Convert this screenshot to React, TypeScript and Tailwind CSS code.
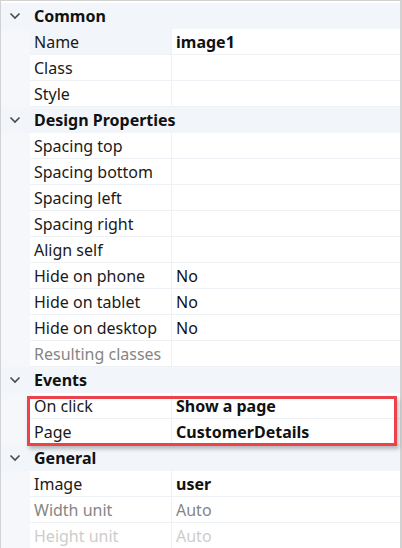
import React from 'react'

type Row = {
  label: string
  value?: string
  bold?: boolean
  muted?: boolean
  faded?: boolean
  selected?: boolean
}

type Group = { title: string; rows: Row[] }

const groups: Group[] = [
  {
    title: 'Common',
    rows: [
      { label: 'Name', value: 'image1', bold: true, selected: true },
      { label: 'Class' },
      { label: 'Style' },
    ],
  },
  {
    title: 'Design Properties',
    rows: [
      { label: 'Spacing top' },
      { label: 'Spacing bottom' },
      { label: 'Spacing left' },
      { label: 'Spacing right' },
      { label: 'Align self' },
      { label: 'Hide on phone', value: 'No' },
      { label: 'Hide on tablet', value: 'No' },
      { label: 'Hide on desktop', value: 'No' },
      { label: 'Resulting classes', muted: true },
    ],
  },
  {
    title: 'Events',
    rows: [
      { label: 'On click', value: 'Show a page', bold: true },
      { label: 'Page', value: 'CustomerDetails', bold: true },
    ],
  },
  {
    title: 'General',
    rows: [
      { label: 'Image', value: 'user', bold: true },
      { label: 'Width unit', value: 'Auto', muted: true },
      { label: 'Height unit', value: 'Auto', faded: true },
    ],
  },
]

function Chevron() {
  return (
    <svg width="12" height="8" viewBox="0 0 12 8" className="text-[#4a4a4a]">
      <path d="M1.5 1.5 L6 6 L10.5 1.5" fill="none" stroke="currentColor" strokeWidth="1.6" />
    </svg>
  )
}

function GroupHeader({ title }: { title: string }) {
  return (
    <div className="flex h-[26px] items-center bg-[#f2f5f9]">
      <div className="flex w-[29px] shrink-0 justify-center pr-[1px]">
        <Chevron />
      </div>
      <span className="pl-[4px] font-bold text-[#111]">{title}</span>
    </div>
  )
}

function PropRow({ row }: { row: Row }) {
  const labelColor = row.faded ? 'text-[#cdcdcd]' : row.muted ? 'text-[#858585]' : 'text-[#1a1a1a]'
  const valueColor = row.faded
    ? 'text-[#cdcdcd]'
    : row.muted
      ? 'text-[#858585]'
      : 'text-[#111]'
  return (
    <div className="flex h-[26px]">
      <div className="w-[29px] shrink-0 bg-[#f5f7fa]" />
      <div
        className={`flex w-[142px] shrink-0 items-center border-b border-r border-[#eef1f5] pl-[4px] ${labelColor} ${
          row.selected ? 'bg-[#f2f5f9]' : 'bg-white'
        }`}
      >
        {row.label}
      </div>
      <div
        className={`flex flex-1 items-center border-b border-[#eef1f5] bg-white pl-[4px] ${valueColor} ${
          row.bold ? 'font-bold' : ''
        }`}
      >
        {row.value}
      </div>
    </div>
  )
}

export default function App() {
  return (
    <div className="h-[548px] w-[402px] overflow-hidden bg-white">
      <div
        className="relative h-[548px] w-[402px] border-l border-r-2 border-t border-[#d2d2d2] pt-[2px] text-[16px] leading-none"
        style={{ fontFamily: '"Noto Sans", "Open Sans", sans-serif' }}
      >
        {groups.map((g) => (
          <div key={g.title}>
            <GroupHeader title={g.title} />
            {g.rows.map((r) => (
              <PropRow key={r.label} row={r} />
            ))}
          </div>
        ))}
        <div className="absolute left-[26px] top-[395px] h-[50px] w-[370px] border-[3px] border-[#ec4249] shadow-[2px_3px_4px_rgba(0,0,0,0.25)]" />
      </div>
    </div>
  )
}
